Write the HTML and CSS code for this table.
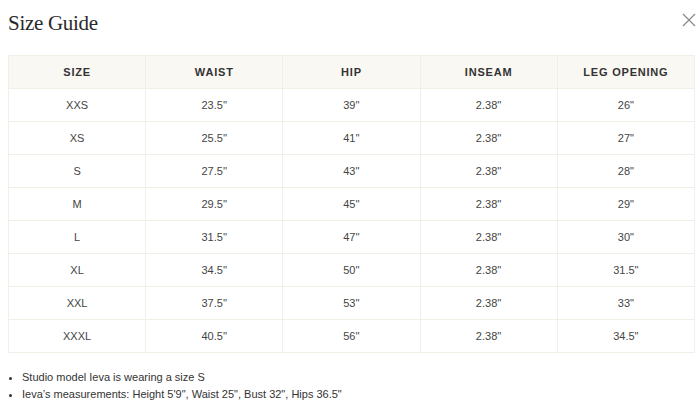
FILE: index.html
```html
<!DOCTYPE html>
<html>
<head>
<meta charset="utf-8">
<link rel="stylesheet" href="styles.css">
</head>
<body>
<div class="modal">
  <div class="head">
    <h1 class="title">Size Guide</h1>
    <button class="close" aria-label="Close">
      <svg width="14" height="14" viewBox="0 0 14 14"><path d="M1 1L13 13M13 1L1 13" stroke="#8a8a8a" stroke-width="1.3" fill="none"/></svg>
    </button>
  </div>
  <table class="sizes">
    <thead>
      <tr><th>SIZE</th><th>WAIST</th><th>HIP</th><th>INSEAM</th><th>LEG OPENING</th></tr>
    </thead>
    <tbody>
      <tr><td>XXS</td><td>23.5''</td><td>39''</td><td>2.38''</td><td>26"</td></tr>
      <tr><td>XS</td><td>25.5''</td><td>41''</td><td>2.38''</td><td>27"</td></tr>
      <tr><td>S</td><td>27.5''</td><td>43''</td><td>2.38''</td><td>28"</td></tr>
      <tr><td>M</td><td>29.5''</td><td>45''</td><td>2.38''</td><td>29"</td></tr>
      <tr><td>L</td><td>31.5''</td><td>47''</td><td>2.38''</td><td>30"</td></tr>
      <tr><td>XL</td><td>34.5''</td><td>50''</td><td>2.38''</td><td>31.5"</td></tr>
      <tr><td>XXL</td><td>37.5''</td><td>53''</td><td>2.38''</td><td>33"</td></tr>
      <tr><td>XXXL</td><td>40.5''</td><td>56''</td><td>2.38''</td><td>34.5"</td></tr>
    </tbody>
  </table>
  <ul class="notes">
    <li>Studio model Ieva is wearing a size S</li>
    <li>Ieva’s measurements: Height 5'9", Waist 25", Bust 32", Hips 36.5"</li>
  </ul>
</div>
</body>
</html>
```
FILE: styles.css
```css
* { box-sizing: border-box; }
html, body { margin: 0; padding: 0; background: #fff; }
body { font-family: "Liberation Sans", Arial, sans-serif; color: #333; }
.modal { padding: 8px 4px 0 8px; }
.head { display: flex; justify-content: space-between; align-items: flex-start; height: 47px; }
.title {
  margin: 2px 0 0 0;
  font-family: "Liberation Serif", "Times New Roman", serif;
  font-weight: normal;
  font-size: 21px;
  letter-spacing: -0.3px;
  color: #2a2a2a;
  line-height: 26px;
}
.close { border: 0; background: none; padding: 0; margin: 5px 0 0 0; width: 14px; height: 14px; display: block; }
.close svg { display: block; }
.sizes {
  width: 687px;
  border-collapse: collapse;
  table-layout: fixed;
  font-size: 11px;
}
.sizes th, .sizes td {
  border: 1px solid #f1efe6;
  text-align: center;
  height: 33px;
  padding: 0;
}
.sizes th {
  background: #faf8f3;
  font-weight: bold;
  letter-spacing: 0.8px;
  color: #333;
  height: 33px;
  font-size: 11px;
}
.sizes td { color: #444; }
.notes {
  margin: 16px 0 0 0;
  padding: 0 0 0 14px;
  font-size: 11px;
  color: #333;
  line-height: 17px;
}
```
